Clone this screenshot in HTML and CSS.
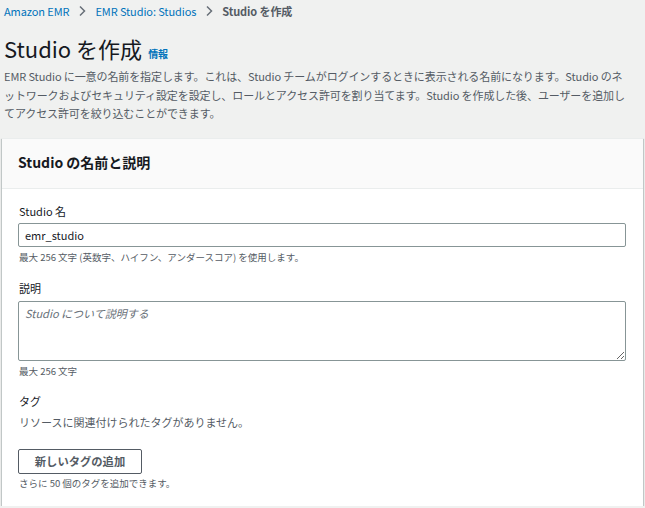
FILE: index.html
```html
<!DOCTYPE html>
<html lang="ja">
<head>
<meta charset="utf-8">
<link rel="stylesheet" href="styles.css">
</head>
<body>
<div class="page">
  <nav class="breadcrumbs">
    <a class="crumb-link" href="#">Amazon EMR</a>
    <svg class="chev" width="10" height="12" viewBox="0 0 10 12"><path d="M3 1.5 L7.5 6 L3 10.5" fill="none" stroke="#687078" stroke-width="1.5"/></svg>
    <a class="crumb-link" href="#">EMR Studio: Studios</a>
    <svg class="chev" width="10" height="12" viewBox="0 0 10 12"><path d="M3 1.5 L7.5 6 L3 10.5" fill="none" stroke="#687078" stroke-width="1.5"/></svg>
    <span class="crumb-current">Studio を作成</span>
  </nav>

  <div class="title-row">
    <h1 class="title">Studio を作成</h1>
    <a class="info" href="#">情報</a>
  </div>

  <p class="desc">EMR Studio に一意の名前を指定します。これは、Studio チームがログインするときに表示される名前になります。Studio のネ<br>ットワークおよびセキュリティ設定を設定し、ロールとアクセス許可を割り当てます。Studio を作成した後、ユーザーを追加し<br>てアクセス許可を絞り込むことができます。</p>

  <section class="card">
    <div class="card-header">
      <h2 class="card-title">Studio の名前と説明</h2>
    </div>
    <div class="card-body">
      <label class="label">Studio 名</label>
      <input class="input" type="text" value="emr_studio">
      <div class="hint">最大 256 文字 (英数字、ハイフン、アンダースコア) を使用します。</div>

      <label class="label label-gap">説明</label>
      <textarea class="textarea" placeholder="Studio について説明する"></textarea>
      <div class="hint">最大 256 文字</div>

      <div class="label label-gap2">タグ</div>
      <div class="empty">リソースに関連付けられたタグがありません。</div>
      <button class="btn" type="button">新しいタグの追加</button>
      <div class="hint hint-tight">さらに 50 個のタグを追加できます。</div>
    </div>
  </section>
</div>
</body>
</html>
```

FILE: styles.css
```css
* { box-sizing: border-box; }
html, body {
  margin: 0;
  padding: 0;
  background: #f0f1f0;
}
body {
  font-family: "Noto Sans CJK JP", "Noto Sans", sans-serif;
  color: #16191f;
}
.page {
  padding: 0 2px 0 2px;
}
.breadcrumbs {
  display: flex;
  align-items: center;
  padding: 4px 2px 0;
  font-size: 11px;
  letter-spacing: -0.1px;
  line-height: 14px;
  height: 18px;
}
.crumb-link {
  color: #0073bb;
  text-decoration: none;
}
.chev {
  margin: 0 8px 0 8px;
}
.crumb-current {
  color: #545b64;
  font-weight: bold;
}
.title-row {
  display: flex;
  align-items: baseline;
  margin-top: 16px;
  padding-left: 2px;
}
.title {
  margin: 0;
  font-size: 22px;
  line-height: 28px;
  font-weight: normal;
  color: #16191f;
}
.info {
  margin-left: 6px;
  font-size: 10px;
  font-weight: bold;
  color: #0073bb;
  text-decoration: none;
}
.desc {
  margin: 5px 0 0;
  padding: 0 2px;
  font-size: 11px;
  letter-spacing: -0.1px;
  line-height: 18.5px;
  color: #545b64;
  white-space: nowrap;
}
.card {
  margin-top: 15px;
  background: #fff;
  border-top: 1px solid #eaeded;
  box-shadow: 0 1px 1px 0 rgba(0,28,36,.3), 1px 1px 1px 0 rgba(0,28,36,.15), -1px 1px 1px 0 rgba(0,28,36,.15);
  width: 641px;
}
.card-header {
  background: #fafafa;
  border-bottom: 1px solid #eaeded;
  padding: 13px 16px 16px;
}
.card-title {
  margin: 0;
  font-size: 14px;
  line-height: 20px;
  font-weight: bold;
  color: #16191f;
}
.card-body {
  display: flex;
  flex-direction: column;
  align-items: flex-start;
  padding: 14px 16px 16px 16px;
}
.label {
  font-size: 11px;
  line-height: 16px;
  color: #16191f;
  padding-left: 1px;
}
.label-gap { margin-top: 16px; }
.label-gap2 { margin-top: 15px; }
.input {
  margin-top: 4px;
  width: 608px;
  height: 24px;
  border: 1px solid #879596;
  border-radius: 2px;
  padding: 0 6px;
  font-family: "Noto Sans CJK JP", "Noto Sans", sans-serif;
  font-size: 11px;
  color: #16191f;
  background: #fff;
  outline: none;
}
.textarea {
  margin-top: 5px;
  width: 608px;
  height: 60px;
  border: 1px solid #879596;
  border-radius: 2px;
  padding: 3px 6px;
  font-family: "Noto Sans CJK JP", "Noto Sans", sans-serif;
  font-size: 11px;
  line-height: 16px;
  background: #fff;
  resize: vertical;
  display: block;
}
.textarea::placeholder {
  color: #687078;
  font-style: italic;
}
.hint {
  margin-top: 3px;
  font-size: 9.5px;
  line-height: 14px;
  color: #545b64;
  padding-left: 1px;
}
.hint-tight { margin-top: 2px; }
.empty {
  margin-top: 5px;
  font-size: 11px;
  line-height: 16px;
  color: #545b64;
  padding-left: 1px;
}
.btn {
  margin-top: 19px;
  width: 124px;
  height: 25px;
  border: 1px solid #545b64;
  border-radius: 2px;
  background: #fff;
  color: #545b64;
  font-family: "Noto Sans CJK JP", "Noto Sans", sans-serif;
  font-size: 11.3px;
  font-weight: bold;
  padding: 0;
}
```
